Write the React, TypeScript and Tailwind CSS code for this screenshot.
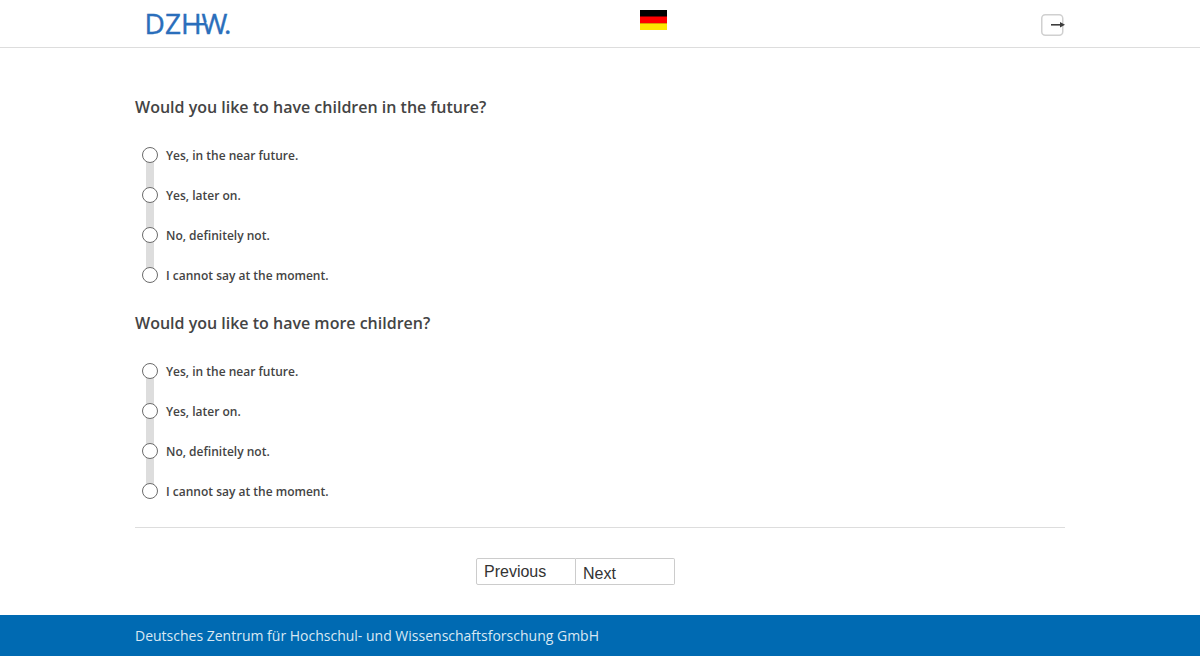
const answers = [
	"Yes, in the near future.",
	"Yes, later on.",
	"No, definitely not.",
	"I cannot say at the moment.",
];

const questions = [
	{ id: "children", title: "Would you like to have children in the future?" },
	{ id: "more-children", title: "Would you like to have more children?" },
];

const Logo = () => (
	<svg className="w-[131px] h-10" viewBox="0 0 131 40" role="img" aria-label="DZHW">
		<text
			x="9.5 30 46 66.5 89"
			y="30"
			fontSize="28"
			fill="#2a6ebb"
			stroke="#2a6ebb"
			strokeWidth="0.4"
			fontFamily="'Open Sans', sans-serif"
		>
			DZHW.
		</text>
		{/* bar that ties the H to the W */}
		<path d="M67.5 21.2 74.5 18" stroke="#fff" strokeWidth="1.6" />
		<path d="M50 20.2H71.5" stroke="#2a6ebb" strokeWidth="2.4" />
	</svg>
);

const Flag = () => (
	<svg className="w-[27px] h-5" viewBox="0 0 27 20" aria-hidden="true">
		<rect width="27" height="20" fill="#000" />
		<rect y="6.5" width="27" height="7" fill="#f00" />
		<rect y="13.3" width="27" height="6.7" fill="#ffe600" />
	</svg>
);

const ExitIcon = () => (
	<svg className="w-6 h-[22px]" viewBox="0 0 24 22" aria-hidden="true">
		<rect x="0.75" y="0.75" width="21" height="20.5" rx="3.5" fill="none" stroke="#d0d0d0" strokeWidth="1.5" />
		<path d="M10 10.8H21" stroke="#3c3c3c" strokeWidth="1.6" />
		<path d="M19 8 24 10.8 19 13.6Z" fill="#3c3c3c" />
	</svg>
);

const Question = ({ id, title }: { id: string, title: string }) => {
	return (
		<fieldset className="mb-4">
			<legend className="mb-4 text-base leading-6 font-semibold">{title}</legend>
			<div className="px-[7px]">
				{answers.map((answer, i) => (
					<label key={answer} className="relative flex h-10 items-center gap-2 text-xs leading-[17px] font-semibold">
						{
							i < answers.length - 1
							?
							<span className="absolute left-1 top-5 h-10 w-2 bg-[#ddd]" />
							:
							null
						}
						<input
							type="radio"
							name={id}
							value={i}
							className="relative z-10 size-4 shrink-0 appearance-none rounded-full border border-[#6b6b6b] bg-white checked:bg-[#006ab2]"
						/>
						{answer}
					</label>
				))}
			</div>
		</fieldset>
	);
};

const App = () => {
	return (
		<div className="bg-white font-['Open_Sans',sans-serif] text-[#444]">
			<header className="border-b border-[#ddd]">
				<div className="mx-auto flex h-[47px] max-w-[930px] items-start justify-between">
					<a href="#home" className="pt-1"><Logo /></a>
					<a href="#de" aria-label="Deutsch" className="pt-2.5"><Flag /></a>
					<button type="button" aria-label="Exit" className="pt-3.5"><ExitIcon /></button>
				</div>
			</header>

			<main className="mx-auto max-w-[930px] pt-[47px]">
				<form onSubmit={(e) => e.preventDefault()}>
					{questions.map((question) => (
						<Question key={question.id} id={question.id} title={question.title} />
					))}
					<hr className="border-[#ddd]" />
					<div className="flex justify-center py-[30px] pr-[49px] font-['Liberation_Sans',sans-serif] text-base text-[#333]">
						<button type="button" className="h-[27px] w-[100px] rounded-l-xs border border-[#ccc] px-[7px] text-left">
							Previous
						</button>
						<button type="submit" className="h-[27px] w-[99px] rounded-r-xs border border-l-0 border-[#ccc] px-[7px] pt-[3px] text-left">
							Next
						</button>
					</div>
				</form>
			</main>

			<footer className="bg-[#006ab2] py-2.5 text-sm leading-[21px] text-[#d9e8f3]">
				<div className="mx-auto max-w-[930px]">
					Deutsches Zentrum für Hochschul- und Wissenschaftsforschung GmbH
				</div>
			</footer>
		</div>
	);
};

export default App
